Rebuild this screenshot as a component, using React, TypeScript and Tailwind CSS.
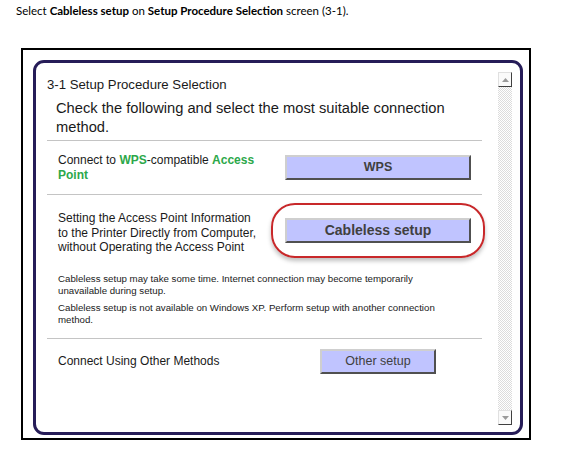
import React from 'react';

const Btn = ({ label, bold, w, big }: { label: string; bold?: boolean; w: string; big?: boolean }) => (
  <div
    className={`${w} h-[25px] flex items-center justify-center bg-[#c0c4ff] border-2 border-t-[#cfcfcf] border-l-[#cfcfcf] border-r-[#505050] border-b-[#505050] text-[#404040] ${
      bold ? 'font-bold' : ''
    } ${big ? 'text-[14px]' : 'text-[12.5px]'}`}
  >
    {label}
  </div>
);

const ScrollBtn = ({ up }: { up?: boolean }) => (
  <div className="w-[14px] h-[15px] bg-[#fafafa] border border-t-[#e0e0e0] border-l-[#e0e0e0] border-r-[#404040] border-b-[#404040] flex items-center justify-center">
    <svg width="7" height="4" viewBox="0 0 7 4">
      {up ? <path d="M0 4 L3.5 0 L7 4 Z" fill="#9a9a9a" /> : <path d="M0 0 L3.5 4 L7 0 Z" fill="#9a9a9a" />}
    </svg>
  </div>
);

export default function App() {
  return (
    <div className="w-[570px] h-[467px] bg-white overflow-hidden" style={{ fontFamily: '"Liberation Sans", Arial, sans-serif' }}>
      {/* caption */}
      <p className="pl-[16px] pt-[3px] text-[11.5px] leading-[16px] text-black" style={{ fontFamily: 'Lato, "Open Sans", sans-serif' }}>
        Select <b>Cableless setup</b> on <b>Setup Procedure Selection</b> screen (3-1).
      </p>

      {/* screen capture */}
      <div className="ml-[21px] mt-[29px] w-[510px] h-[392px] border-2 border-black pl-[10px] pt-[10px] pr-[6px] pb-[3px] flex">
        <div className="flex-1 border-[3px] border-[#261c58] rounded-[11px] flex">
          {/* content */}
          <div className="w-[435px] ml-[11px] text-[#1a1a1a]">
            <div className="pt-[14px] text-[13.2px] leading-[16px]">3-1 Setup Procedure Selection</div>
            <div className="mt-[6px] pl-[9px] text-[14.7px] leading-[19px]">
              Check the following and select the most suitable connection
              <br />
              method.
            </div>
            <div className="mt-[3px] h-px bg-[#c4c4c4]" />

            {/* WPS row */}
            <div className="h-[53px] flex items-center">
              <div className="w-[238px] pl-[11px] text-[12px] leading-[15px]">
                Connect to <span className="text-[#2ca84a] font-bold">WPS</span>-compatible{' '}
                <span className="text-[#2ca84a] font-bold">Access</span>
                <br />
                <span className="text-[#2ca84a] font-bold">Point</span>
              </div>
              <Btn label="WPS" bold w="w-[186px]" />
            </div>
            <div className="h-px bg-[#c4c4c4]" />

            {/* Cableless row */}
            <div className="pt-[16px] flex items-start">
              <div className="w-[238px] pl-[11px] text-[12px] leading-[14.5px]">
                Setting the Access Point Information
                <br />
                to the Printer Directly from Computer,
                <br />
                without Operating the Access Point
              </div>
              <div className="relative mt-[7px]">
                <div className="absolute left-[-14px] top-[-15px] w-[214px] h-[55px] rounded-[24px] border-2 border-[#c8282a] shadow-[0_3px_4px_rgba(0,0,0,0.25)]" />
                <Btn label="Cableless setup" bold big w="w-[186px]" />
              </div>
            </div>
            <div className="pl-[11px] mt-[18px] text-[9.7px] leading-[12.5px]">
              <p>
                Cableless setup may take some time. Internet connection may become temporarily
                <br />
                unavailable during setup.
              </p>
              <p className="mt-[4px]">
                Cableless setup is not available on Windows XP. Perform setup with another connection
                <br />
                method.
              </p>
            </div>
            <div className="mt-[11px] h-px bg-[#c4c4c4]" />

            {/* Other row */}
            <div className="pt-[10px] flex items-center">
              <div className="w-[238px] pl-[11px] text-[12px] leading-[15px]">Connect Using Other Methods</div>
              <div className="w-[186px] flex justify-center">
                <Btn label="Other setup" w="w-[116px]" />
              </div>
            </div>
          </div>

          {/* scrollbar */}
          <div className="ml-[16px] mt-[9px] mb-[7px] w-[14px] flex flex-col">
            <ScrollBtn up />
            <div className="flex-1 bg-[repeating-conic-gradient(#dcdcdc_0_25%,#ffffff_0_50%)] bg-[length:2px_2px]" />
            <ScrollBtn />
          </div>
        </div>
      </div>
    </div>
  );
}
